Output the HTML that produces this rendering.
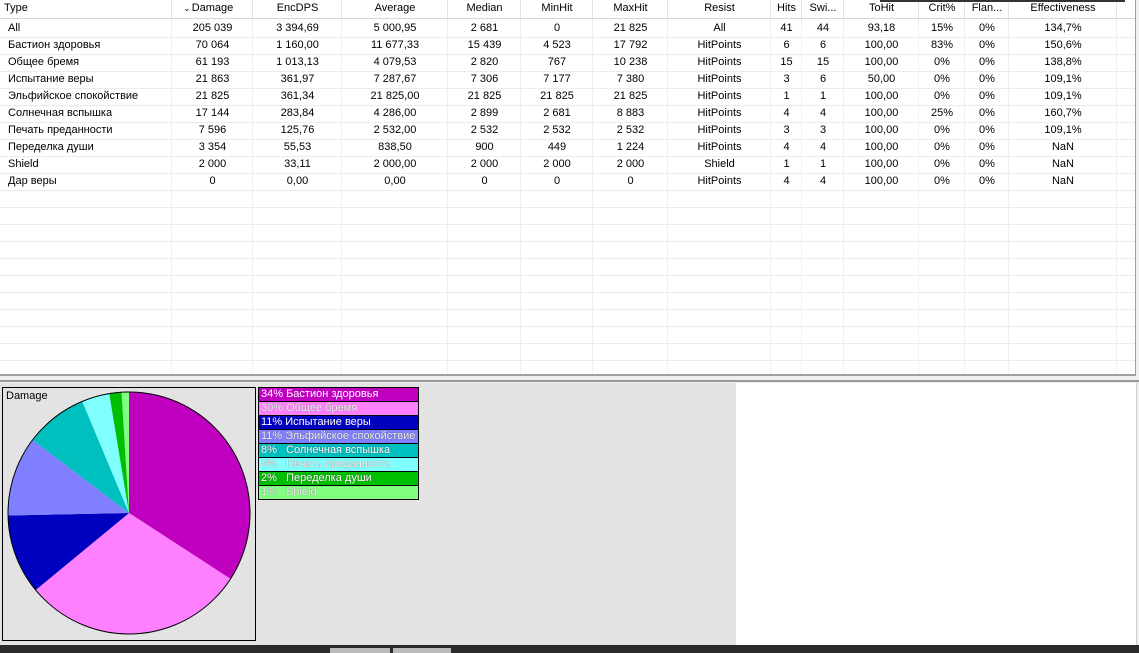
<!DOCTYPE html>
<html><head><meta charset="utf-8"><style>
body{margin:0;width:1139px;height:653px;overflow:hidden;background:#f0f0f0;font-family:"Liberation Sans",sans-serif;font-size:11px;color:#000;position:relative}
.grid{position:absolute;left:0;top:0;width:1135px;height:374px;background:#fff;border-right:1px solid #a0a0a0;border-bottom:2px solid #a0a0a0;overflow:hidden}
.c{position:absolute;white-space:nowrap;height:17px;line-height:17px}
.vl{position:absolute;top:0;width:1px;height:374px;background:#f0f0f0}
.hl{position:absolute;left:0;width:1135px;height:1px;background:#ececec}
.bot{position:absolute;left:0;top:383px;width:736px;height:262px;background:#e3e3e3}
.white{position:absolute;left:736px;top:383px;width:400px;height:262px;background:#fff;border-right:1px solid #ccc}
.leg div{height:13px;line-height:13px;border-bottom:1px solid #000;font-size:11px;padding-left:2px;white-space:nowrap;overflow:visible}
</style></head><body>
<div class="grid" id="g"></div>
<div style="position:absolute;left:0;top:380px;width:1139px;height:2px;background:#999"></div>
<div class="bot"></div>
<div class="white"></div>
<div style="position:absolute;left:2px;top:387px;width:252px;height:252px;border:1px solid #000;background:#e3e3e3"></div>
<div style="position:absolute;left:6px;top:390px;font-size:11px">Damage</div>
<svg id="pie" style="position:absolute;left:0;top:383px" width="260" height="262"></svg>
<div class="leg" style="position:absolute;left:258px;top:387px;width:159px;border:1px solid #000;border-bottom:0">
<div style="background:#bf00bf;color:#fff">34% Бастион здоровья</div>
<div style="background:#ff80ff;color:#eee;text-shadow:0 0 1px #666">30% Общее бремя</div>
<div style="background:#0000bf;color:#fff">11% Испытание веры</div>
<div style="background:#8080ff;color:#eee;text-shadow:0 0 1px #444">11% Эльфийское спокойствие</div>
<div style="background:#00bfbf;color:#fff;text-shadow:0 0 1px #444">8% &nbsp;&nbsp;Солнечная вспышка</div>
<div style="background:#80ffff;color:#eee;text-shadow:0 0 1px #666">4% &nbsp;&nbsp;Печать преданности</div>
<div style="background:#00bf00;color:#fff;text-shadow:0 0 1px #444">2% &nbsp;&nbsp;Переделка души</div>
<div style="background:#80ff80;color:#eee;text-shadow:0 0 1px #666">1% &nbsp;&nbsp;Shield</div>
</div>
<div style="position:absolute;left:0;top:645px;width:1139px;height:8px;background:#2a2a2a"></div>
<div style="position:absolute;left:330px;top:648px;width:60px;height:5px;background:#bbb"></div>
<div style="position:absolute;left:393px;top:648px;width:58px;height:5px;background:#bbb"></div>
<script>
var g=document.getElementById('g');
var L=[0,172,253,342,448,521,593,668,771,802,844,919,965,1009,1117,1135];
var al=['l','c','c','c','c','c','c','c','c','c','c','c','c','c'];
var hd=['Type','Damage','EncDPS','Average','Median','MinHit','MaxHit','Resist','Hits','Swi...','ToHit','Crit%','Flan...','Effectiveness'];
var rows=[
['All','205 039','3 394,69','5 000,95','2 681','0','21 825','All','41','44','93,18','15%','0%','134,7%'],
['Бастион здоровья','70 064','1 160,00','11 677,33','15 439','4 523','17 792','HitPoints','6','6','100,00','83%','0%','150,6%'],
['Общее бремя','61 193','1 013,13','4 079,53','2 820','767','10 238','HitPoints','15','15','100,00','0%','0%','138,8%'],
['Испытание веры','21 863','361,97','7 287,67','7 306','7 177','7 380','HitPoints','3','6','50,00','0%','0%','109,1%'],
['Эльфийское спокойствие','21 825','361,34','21 825,00','21 825','21 825','21 825','HitPoints','1','1','100,00','0%','0%','109,1%'],
['Солнечная вспышка','17 144','283,84','4 286,00','2 899','2 681','8 883','HitPoints','4','4','100,00','25%','0%','160,7%'],
['Печать преданности','7 596','125,76','2 532,00','2 532','2 532','2 532','HitPoints','3','3','100,00','0%','0%','109,1%'],
['Переделка души','3 354','55,53','838,50','900','449','1 224','HitPoints','4','4','100,00','0%','0%','NaN'],
['Shield','2 000','33,11','2 000,00','2 000','2 000','2 000','Shield','1','1','100,00','0%','0%','NaN'],
['Дар веры','0','0,00','0,00','0','0','0','HitPoints','4','4','100,00','0%','0%','NaN']];
var h='';
for(var i=1;i<L.length-1;i++)h+='<div class="vl" style="left:'+(L[i]-1)+'px;'+(i<L.length-1?'':'')+'"></div>';
h+='<div style="position:absolute;left:0;top:0;width:1135px;height:18px;background:#fff;border-bottom:1px solid #d5d5d5"></div>';
for(var i=1;i<L.length-1;i++)h+='<div style="position:absolute;top:0;height:18px;width:1px;background:#e3e3e3;left:'+(L[i]-1)+'px"></div>';
for(var y=37;y<374;y+=17)h+='<div class="hl" style="top:'+y+'px"></div>';
function cell(t,i,y){var x=L[i],w=L[i+1]-L[i];if(i==0)return '<div class="c" style="left:'+(i==0?8:x)+'px;top:'+y+'px">'+t+'</div>';return '<div class="c" style="left:'+x+'px;width:'+w+'px;text-align:center;top:'+y+'px">'+t+'</div>';}
for(var i=0;i<hd.length;i++){if(i==0)h+='<div class="c" style="left:4px;top:0;height:16px;line-height:16px">Type</div>';else h+='<div class="c" style="left:'+L[i]+'px;width:'+(L[i+1]-L[i])+'px;text-align:center;top:0;height:16px;line-height:16px">'+hd[i]+'</div>';}
h+='<div class="c" style="left:183px;top:0;height:16px;line-height:16px;font-size:9px">&#8964;</div>';
for(var r=0;r<rows.length;r++)for(var i=0;i<14;i++)h+=cell(rows[r][i],i,20+17*r);
h+='<div style="position:absolute;left:880px;top:0;width:245px;height:2px;background:#333"></div>';
g.innerHTML=h;
var v=[70064,61193,21863,21825,17144,7596,3354,2000],c=['#bf00bf','#ff80ff','#0000bf','#8080ff','#00bfbf','#80ffff','#00bf00','#80ff80'];
var T=205039,cx=129,cy=130,R=121,a=0,s='';
for(var k=0;k<8;k++){var a2=a+v[k]/T*2*Math.PI;var x1=cx+R*Math.sin(a),y1=cy-R*Math.cos(a),x2=cx+R*Math.sin(a2),y2=cy-R*Math.cos(a2);
s+='<path d="M'+cx+','+cy+' L'+x1+','+y1+' A'+R+','+R+' 0 '+(a2-a>Math.PI?1:0)+',1 '+x2+','+y2+' Z" fill="'+c[k]+'"/>';a=a2;}
s+='<circle cx="'+cx+'" cy="'+cy+'" r="'+R+'" fill="none" stroke="#000" stroke-width="1"/>';
document.getElementById('pie').innerHTML=s;
</script>
</body></html>
